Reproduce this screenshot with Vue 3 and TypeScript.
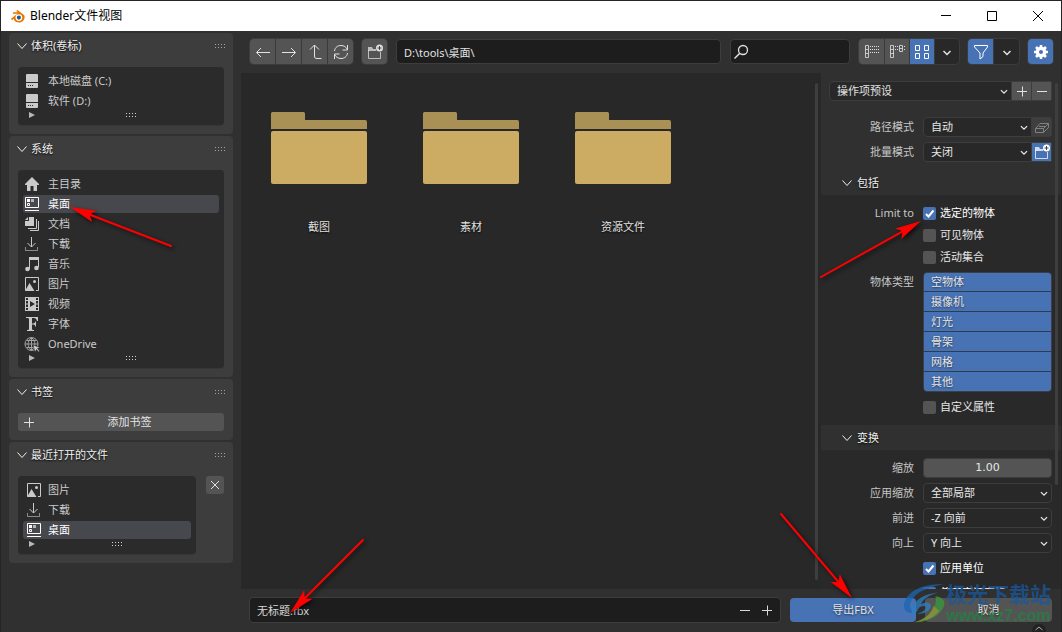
<script setup lang="ts">
import { ref } from 'vue'

interface Place {
  icon: string
  name: string
}

const icons: Record<string, string> = {
  drive:
    '<path d="M3 1h10a1 1 0 0 1 1 1v7H2V2a1 1 0 0 1 1-1zM2 10h12v4a1 1 0 0 1-1 1H3a1 1 0 0 1-1-1z" fill="currentColor" stroke="none"/><path d="M4 12.500h1M6 12.500h1M8 12.500h1" stroke="#2b2b2b"/>',
  home: '<path d="M8 1 15 8v1h-2v6h-3.500v-5h-3v5H3V9H1V8l3-3z" fill="currentColor" stroke="none"/>',
  desktop:
    '<path d="M1.500 1.500h13v10h-13zM1 14.500h14M3.500 7.500h2v2h-2z"/><path d="M3 3h3v3H3z" fill="currentColor" stroke="none"/><path d="M7 3h3v3H7z" fill="currentColor" stroke="none" opacity=".6"/>',
  documents:
    '<path d="M5 1h5v9H1V5h4z" fill="currentColor" stroke="none"/><path d="M4 1 1 4h3z" fill="currentColor" stroke="none"/><path d="M12.500 3v9.500H4M14.500 5v9.500H6"/>',
  download: '<path d="M7.500 1v10M3.500 7l4 4 4-4"/><path d="M1.500 11v3.500h12V11" opacity=".6"/>',
  music:
    '<path d="M5.500 13V2.500h9V11"/><path d="M5 1h10v3H5z" fill="currentColor" stroke="none"/><circle cx="3.500" cy="13" r="2.300" fill="currentColor" stroke="none"/><circle cx="12.500" cy="12" r="2.300" fill="currentColor" stroke="none"/>',
  image:
    '<path d="M12 14.500h2.500v-13h-13v13"/><path d="M1 15 5.500 7l5 8z" fill="currentColor" stroke="none"/><circle cx="10.500" cy="5.500" r="1.500" fill="currentColor" stroke="none"/>',
  video:
    '<path d="M4 1h8v14H4z" fill="currentColor" stroke="none"/><path d="M6 5v6l5-3z" fill="#2b2b2b" stroke="none"/><path d="M1.500 1v14M14.500 1v14M1 1.500h3M12 1.500h3M1 4.500h3M12 4.500h3M1 8h3M12 8h3M1 11.500h3M12 11.500h3M1 14.500h3M12 14.500h3"/>',
  font: '<path d="M2 1h12v4h-1c-.5-2-1.500-3-3-3H8v5.500h1c1.500 0 2-.7 2.300-2H12v5h-.7C11 9 10.500 8.500 9 8.500H8V13c0 .8.500 1 2 1v1H3v-1c1.500 0 2-.2 2-1V3c0-.8-.5-1-3-1z" fill="currentColor" stroke="none"/>',
  globe:
    '<g opacity=".75"><circle cx="7.500" cy="8" r="6.500"/><path d="M7.500 1.500v13M1 8h13M2.500 4.500h10M2.500 11.500h7M7.500 1.500c-4.500 4-4.500 9 0 13M7.500 1.500c4.500 4 4.500 9 0 13"/></g><path d="m9 9 7 2.500-2.500 1L15.500 15l-1 1-2-2.500L11 16z" fill="currentColor" stroke="#2b2b2b" stroke-width=".5"/>',
  back: '<path d="M15 8.500H1.500M6 4 1.500 8.500 6 13"/>',
  forward: '<path d="M1 8.500h13.500M10 4l4.500 4.500L10 13"/>',
  up: '<path d="M3 5.500 7.500 1 12 5.500M7.500 1v11c0 2 1 2.500 2.500 2.500h4.500"/>',
  refresh: '<path d="M1.500 7C2 3 5 1.500 8 1.500c3 0 5 1.500 6.500 4M14.500 1v5h-5M14.500 9c-.5 4-3.500 5.500-6.500 5.500-3 0-5-1.500-6.500-4M1.500 15v-5h5"/>',
  newfolder:
    '<path d="M1.500 6v8.500h12V8" opacity=".75"/><path d="M1 3h4l1 2h3v2H1z" fill="currentColor" stroke="none" opacity=".75"/><circle cx="12.500" cy="4" r="3.500" fill="currentColor" stroke="none"/><path d="M12.500 2v4M10.500 4h4" stroke="#454545"/>',
  search: '<circle cx="10" cy="6" r="4.500" stroke-width="1.300"/><path d="M6.800 9.200 1.500 14.500" stroke-width="1.500"/>',
  list: '<path d="M1.500 1.500h3v12h-3zM1.500 5.500h3M1.500 9.500h3" opacity=".8"/><path d="M6 2.500h9M6 5.500h9M6 8.500h9" stroke-dasharray="1 1"/>',
  detail:
    '<path d="M1.500 1.500h3v12h-3zM1.500 5.500h3M1.500 9.500h3M10.500 1.500h3v6h-3zM10.500 4.500h3" opacity=".8"/><path d="M6 2.500h3M6 5.500h3M15 2.500h1M15 5.500h1" stroke-dasharray="1 1"/>',
  grid: '<path d="M1.500 1.500h4v5h-4zM10.500 1.500h4v5h-4zM1.500 9.500h4v5h-4zM10.500 9.500h4v5h-4z"/>',
  filter: '<path d="M1.500 1.500h13v1.500L10 9v3.500l-3 2.500V9L1.500 3z"/>',
  gear: '<circle cx="8" cy="8" r="3.700" stroke-width="3.400"/><path d="M8 1v3M8 12v3M1 8h3M12 8h3M3 3l2 2M11 11l2 2M13 3l-2 2M3 13l2-2" stroke-width="2.600"/>',
  chevron: '<path d="m4.500 7 3.500 3.500L11.500 7" stroke-width="1.500"/>',
  thin: '<path d="m3.500 5.500 4.500 5 4.500-5"/>',
  plus: '<path d="M3 8.500h10M8.500 3.500v10"/>',
  minus: '<path d="M3 8.500h10"/>',
  cross: '<path d="m4 4 8 8M12 4l-8 8"/>',
  box: '<path d="M1.500 9.500h8v4h-8zM1.500 9.500 6 4.500h8.500l-5 5M14.500 4.500v4l-5 5M5 7.500h6"/>',
}

const volumes: Place[] = [
  { icon: 'drive', name: '本地磁盘 (C:)' },
  { icon: 'drive', name: '软件 (D:)' },
]
const system: Place[] = [
  { icon: 'home', name: '主目录' },
  { icon: 'desktop', name: '桌面' },
  { icon: 'documents', name: '文档' },
  { icon: 'download', name: '下载' },
  { icon: 'music', name: '音乐' },
  { icon: 'image', name: '图片' },
  { icon: 'video', name: '视频' },
  { icon: 'font', name: '字体' },
  { icon: 'globe', name: 'OneDrive' },
]
const recent: Place[] = [
  { icon: 'image', name: '图片' },
  { icon: 'download', name: '下载' },
  { icon: 'desktop', name: '桌面' },
]
const placeLists = [
  { title: '体积(卷标)', items: volumes },
  { title: '系统', items: system },
]
const folders = ['截图', '素材', '资源文件']

const current = ref('桌面')
const path = ref('D:\\tools\\桌面\\')
const query = ref('')
const fileName = ref('无标题.fbx')
const scale = ref('1.00')

const limits = ref([
  { name: '选定的物体', on: true },
  { name: '可见物体', on: false },
  { name: '活动集合', on: false },
])
const custom = ref(false)
const units = ref([
  { name: '应用单位', on: true },
  { name: '使用空间变换', on: true },
])
const objectTypes = ref(
  ['空物体', '摄像机', '灯光', '骨架', '网格', '其他'].map((name) => ({ name, on: true })),
)
const axes = [
  { id: 'apply', label: '应用缩放', value: '全部局部' },
  { id: 'fwd', label: '前进', value: '-Z 向前' },
  { id: 'upward', label: '向上', value: 'Y 向上' },
]

// Annotation arrows: tail and tip positions on the canvas
const arrows = [
  [171, 246, 70, 207],
  [821, 277, 921, 221],
  [363, 540, 290, 613],
  [781, 514, 852, 598],
].map(([x1, y1, x2, y2]) => {
  const length = Math.hypot(x2 - x1, y2 - y1)
  const ux = (x2 - x1) / length
  const uy = (y2 - y1) / length
  const at = (back: number, side: number) =>
    `${x2 - ux * back - uy * side},${y2 - uy * back + ux * side}`
  return {
    shaft: `M${x1},${y1}L${at(18, 0)}`,
    head: [at(0, 0), at(26, 6), at(21, 0), at(26, -6)].join(' '),
  }
})
</script>

<template>
  <div class="window">
    <header class="titlebar">
      <svg class="logo" viewBox="0 0 16 14" aria-hidden="true">
        <path d="M1 9.500 8 4H3V2.500h5.500L6.500 1 8 0l7 5.500c2 3-.5 8-5.500 8-3.500 0-5.500-2.500-5.500-4L2 11z" fill="#ea7600" />
        <circle cx="9.500" cy="8.200" r="3.600" fill="#fff" />
        <circle cx="9.500" cy="8.200" r="2.200" fill="#265787" />
      </svg>
      <h1>Blender文件视图</h1>
      <button type="button" aria-label="最小化"><svg viewBox="0 0 12 12"><path d="M1 5.500h10" /></svg></button>
      <button type="button" aria-label="最大化"><svg viewBox="0 0 12 12"><path d="M1.500 1.500h9v9h-9z" /></svg></button>
      <button type="button" aria-label="关闭"><svg viewBox="0 0 12 12"><path d="m1 1 10 10M11 1 1 11" /></svg></button>
    </header>

    <div class="body">
      <aside class="sidebar">
        <section v-for="group in placeLists" :key="group.title" class="panel">
          <h2>
            <svg class="icon" viewBox="0 0 16 16" v-html="icons.thin" />
            {{ group.title }}
            <span class="grip head-grip" />
          </h2>
          <div class="places">
            <button
              v-for="item in group.items"
              :key="item.name"
              type="button"
              :class="['place', { active: item.name === current }]"
              @click="current = item.name"
            >
              <svg class="icon" viewBox="0 0 16 16" v-html="icons[item.icon]" />{{ item.name }}
            </button>
            <div class="list-foot"><span class="play" /><span class="grip" /></div>
          </div>
        </section>

        <section class="panel">
          <h2>
            <svg class="icon" viewBox="0 0 16 16" v-html="icons.thin" />
            书签
            <span class="grip head-grip" />
          </h2>
          <button type="button" class="add">
            <svg class="icon" viewBox="0 0 16 16" v-html="icons.plus" /><span>添加书签</span>
          </button>
        </section>

        <section class="panel">
          <h2>
            <svg class="icon" viewBox="0 0 16 16" v-html="icons.thin" />
            最近打开的文件
            <span class="grip head-grip" />
          </h2>
          <div class="recent">
            <div class="places inset">
              <button
                v-for="item in recent"
                :key="item.name"
                type="button"
                :class="['place', { active: item.name === current }]"
                @click="current = item.name"
              >
                <svg class="icon" viewBox="0 0 16 16" v-html="icons[item.icon]" />{{ item.name }}
              </button>
              <div class="list-foot"><span class="play" /><span class="grip" /></div>
            </div>
            <button type="button" class="clear" aria-label="清除">
              <svg class="icon" viewBox="0 0 16 16" v-html="icons.cross" />
            </button>
          </div>
        </section>
      </aside>

      <nav class="toolbar">
        <div class="group">
          <button v-for="n in ['back', 'forward', 'up', 'refresh']" :key="n" type="button" class="tool" :aria-label="n">
            <svg class="icon" viewBox="0 0 16 16" v-html="icons[n]" />
          </button>
        </div>
        <div class="group">
          <button type="button" class="tool" aria-label="新建文件夹">
            <svg class="icon" viewBox="0 0 16 16" v-html="icons.newfolder" />
          </button>
        </div>
        <input v-model="path" class="text path" type="text" aria-label="路径" />
        <label class="search">
          <svg class="icon" viewBox="0 0 16 16" v-html="icons.search" />
          <input v-model="query" class="text" type="text" aria-label="搜索" />
        </label>
        <div class="group modes">
          <button type="button" class="tool" aria-label="垂直列表"><svg class="icon" viewBox="0 0 16 16" v-html="icons.list" /></button>
          <button type="button" class="tool" aria-label="水平列表"><svg class="icon" viewBox="0 0 16 16" v-html="icons.detail" /></button>
          <button type="button" class="tool on" aria-label="缩略图"><svg class="icon" viewBox="0 0 16 16" v-html="icons.grid" /></button>
          <button type="button" class="tool dark" aria-label="显示设置"><svg class="icon" viewBox="0 0 16 16" v-html="icons.chevron" /></button>
        </div>
        <div class="group">
          <button type="button" class="tool on" aria-label="过滤"><svg class="icon" viewBox="0 0 16 16" v-html="icons.filter" /></button>
          <button type="button" class="tool dark" aria-label="过滤设置"><svg class="icon" viewBox="0 0 16 16" v-html="icons.chevron" /></button>
        </div>
        <div class="group">
          <button type="button" class="tool on" aria-label="选项"><svg class="icon" viewBox="0 0 16 16" v-html="icons.gear" /></button>
        </div>
      </nav>

      <main class="files">
        <button v-for="name in folders" :key="name" type="button" class="folder">
          <svg viewBox="0 0 96 72" aria-hidden="true">
            <path d="M0 17V1.500Q0 0 1.500 0h31Q34 0 34 1.500V8h60q2 0 2 2v7z" fill="#a99156" />
            <rect y="19" width="96" height="53" rx="2" fill="#ccab62" />
          </svg>
          {{ name }}
        </button>
        <span class="thumb" />
      </main>

      <aside class="options">
        <div class="presets-block">
          <div class="joined">
            <div class="select">
              <select aria-label="操作项预设"><option>操作项预设</option></select>
              <svg class="icon" viewBox="0 0 16 16" v-html="icons.chevron" />
            </div>
            <button type="button" class="mini" aria-label="添加预设"><svg class="icon" viewBox="0 0 16 16" v-html="icons.plus" /></button>
            <button type="button" class="mini" aria-label="移除预设"><svg class="icon" viewBox="0 0 16 16" v-html="icons.minus" /></button>
          </div>
          <div class="rows">
            <div class="field">
              <label for="pathmode">路径模式</label>
              <div class="joined">
                <div class="select">
                  <select id="pathmode"><option>自动</option></select>
                  <svg class="icon" viewBox="0 0 16 16" v-html="icons.chevron" />
                </div>
                <button type="button" class="mini dim" aria-label="内嵌纹理"><svg class="icon" viewBox="0 0 16 16" v-html="icons.box" /></button>
              </div>
            </div>
            <div class="field">
              <label for="batch">批量模式</label>
              <div class="joined">
                <div class="select">
                  <select id="batch"><option>关闭</option></select>
                  <svg class="icon" viewBox="0 0 16 16" v-html="icons.chevron" />
                </div>
                <button type="button" class="mini on" aria-label="批量自有目录"><svg class="icon" viewBox="0 0 16 16" v-html="icons.newfolder" /></button>
              </div>
            </div>
          </div>
        </div>

        <h3><svg class="icon" viewBox="0 0 16 16" v-html="icons.thin" />包括</h3>
        <div class="include">
          <div class="field top">
            <span class="caption">Limit to</span>
            <div>
              <label v-for="item in limits" :key="item.name" class="check">
                <input v-model="item.on" type="checkbox" />
                <svg v-if="item.on" viewBox="0 0 13 13"><path d="m3 7 2.500 2.500L10.500 3.500" /></svg>
                <span>{{ item.name }}</span>
              </label>
            </div>
          </div>
          <div class="field top">
            <span class="caption types-caption">物体类型</span>
            <div class="types">
              <button
                v-for="item in objectTypes"
                :key="item.name"
                type="button"
                :class="{ off: !item.on }"
                :aria-pressed="item.on"
                @click="item.on = !item.on"
              >{{ item.name }}</button>
            </div>
          </div>
          <div class="field top">
            <span />
            <label class="check"><input v-model="custom" type="checkbox" /><span>自定义属性</span></label>
          </div>
        </div>

        <h3><svg class="icon" viewBox="0 0 16 16" v-html="icons.thin" />变换</h3>
        <div class="rows transform">
          <div class="field">
            <label for="scale">缩放</label>
            <input id="scale" v-model="scale" class="number" type="text" inputmode="decimal" />
          </div>
          <div v-for="axis in axes" :key="axis.id" class="field">
            <label :for="axis.id">{{ axis.label }}</label>
            <div class="select">
              <select :id="axis.id"><option>{{ axis.value }}</option></select>
              <svg class="icon" viewBox="0 0 16 16" v-html="icons.chevron" />
            </div>
          </div>
          <div v-for="item in units" :key="item.name" class="field">
            <span />
            <label class="check">
              <input v-model="item.on" type="checkbox" />
              <svg v-if="item.on" viewBox="0 0 13 13"><path d="m3 7 2.500 2.500L10.500 3.500" /></svg>
              <span>{{ item.name }}</span>
            </label>
          </div>
        </div>
        <span class="thumb short" />
      </aside>

      <footer class="footer">
        <div class="filename">
          <input v-model="fileName" class="text" type="text" aria-label="文件名" />
          <button type="button" aria-label="减少"><svg class="icon" viewBox="0 0 16 16" v-html="icons.minus" /></button>
          <button type="button" aria-label="增加"><svg class="icon" viewBox="0 0 16 16" v-html="icons.plus" /></button>
        </div>
        <button type="button" class="action primary">导出FBX</button>
        <button type="button" class="action">取消</button>
        <span class="tab"><svg viewBox="0 0 14 8"><path d="m3.500 6 3.500-3 3.500 3" /></svg></span>
      </footer>
    </div>

    <div class="watermark" aria-hidden="true">
      <svg viewBox="0 0 44 44">
        <path d="M11 31C1 33-2 24 4 15 11 5 26 1 43 1 27 4 14 9 9 18c-3 5-2 9 2 13z" fill="#1b66b3" />
        <path d="M10 33C8 24 15 12 37 10c-10 3-16 7-18 12 5-3 11-2 10 3-1 5-8 8-14 7 5-1 9-4 9-6 0-3-6-2-8 1-1 3-3 5-6 6z" fill="#2b80c4" />
        <path d="M34 14c10 1 12 8 6 15-6 8-17 12-27 12 12-4 24-14 21-27z" fill="#3a9a3c" />
        <path d="M32 24c-2 8-9 14-20 17 9 0 20-4 26-12z" fill="#8fa035" />
      </svg>
      <div><b>极光下载站</b><i>www.xz7.com</i></div>
    </div>

    <svg class="annotations" aria-hidden="true">
      <g v-for="arrow in arrows" :key="arrow.shaft">
        <path :d="arrow.shaft" />
        <polygon :points="arrow.head" />
      </g>
    </svg>
  </div>
</template>

<style>
body {
  margin: 0;
  background: #303030;
}
</style>

<style scoped>
* {
  box-sizing: border-box;
}
.window {
  position: relative;
  display: flex;
  flex-direction: column;
  height: 100vh;
  overflow: hidden;
  border: 1px solid #262427;
  border-bottom: 0;
  background: #303030;
  color: #e2e2e2;
  font: 11px/20px "Noto Sans", "Noto Sans CJK SC", sans-serif;
}
button,
input,
select {
  margin: 0;
  padding: 0;
  border: 0;
  outline: 0;
  background: none;
  color: inherit;
  font: inherit;
  text-shadow: inherit;
}
h1,
h2,
h3 {
  margin: 0;
  font: inherit;
}
svg {
  display: block;
}
.icon {
  flex: none;
  width: 16px;
  height: 16px;
  fill: none;
  stroke: currentColor;
}
.titlebar {
  display: flex;
  flex: none;
  align-items: center;
  height: 30px;
  padding-left: 9px;
  background: #fff;
  color: #000;
  font-size: 12px;
}
.titlebar h1 {
  flex: 1;
  padding-left: 5px;
}
.logo {
  width: 15px;
  height: 13px;
}
.titlebar button {
  display: grid;
  place-items: center;
  width: 46px;
  height: 30px;
}
.titlebar button svg {
  width: 12px;
  height: 12px;
  fill: none;
  stroke: #000;
}
.body {
  display: grid;
  flex: 1;
  grid-template: 42px minmax(0, 1fr) 43px / 240px minmax(0, 1fr) 240px;
  grid-template-areas: "side tools tools" "side files options" "side foot foot";
  min-height: 0;
}
.sidebar {
  display: flex;
  grid-area: side;
  flex-direction: column;
  gap: 2px;
  padding: 2px 8px;
}
.panel {
  padding: 0 9px 9px;
  border-radius: 4px;
  background: #3d3d3d;
}
.panel h2 {
  display: flex;
  align-items: center;
  gap: 1px;
  height: 26px;
  margin: 0 -2px 8px -4px;
  color: #f0f0f0;
  text-shadow: 0 1px 2px #000;
}
.grip {
  width: 10px;
  height: 4px;
  background: conic-gradient(from 270deg at 1px 1px, #d0d0d0 90deg, transparent 0) 0 0 / 3px 3px;
}
.head-grip {
  margin-right: 1px;
  margin-left: auto;
  opacity: 0.7;
}
.places {
  padding: 4px 5px 0;
  border-radius: 4px;
  background: #2b2b2b;
  box-shadow: 0 1px 0 #363636;
}
.place {
  display: flex;
  align-items: center;
  gap: 8px;
  width: 100%;
  height: 18px;
  margin: 2px 0;
  padding-left: 1px;
  border-radius: 3px;
  color: #cacaca;
}
.place:first-child {
  margin-top: 1px;
}
.inset .place {
  gap: 6px;
  padding-left: 3px;
}
.place.active {
  background: #47484e;
  color: #fff;
}
.list-foot {
  display: grid;
  grid-template-columns: 20px 1fr;
  height: 13px;
  padding: 0 6px;
}
.play {
  width: 0;
  height: 0;
  border: 3px solid transparent;
  border-right: 0;
  border-left: 6px solid #b8b8b8;
}
.list-foot .grip {
  justify-self: center;
  margin-top: 1px;
}
.add {
  display: grid;
  grid-template-columns: 16px 1fr;
  align-items: center;
  width: 100%;
  height: 18px;
  padding: 0 2px 0 3px;
  border-radius: 3px;
  background: #545454;
  line-height: 18px;
}
.recent {
  display: grid;
  grid-template-columns: 1fr 18px;
  gap: 10px;
}
.clear {
  display: grid;
  place-items: center;
  height: 18px;
  border-radius: 3px;
  background: #545454;
}
.toolbar {
  display: flex;
  grid-area: tools;
  gap: 9px;
  padding: 8px 8px 0 9px;
}
.group {
  display: flex;
  flex: none;
  gap: 1px;
  height: 25px;
  overflow: hidden;
  border-radius: 4px;
  background: #3a3a3a;
  box-shadow: 0 0 0 1px #3c3c3c;
}
.tool {
  display: grid;
  place-items: center;
  width: 25px;
  height: 25px;
  background: #545454;
}
.modes .tool:not(:first-child) {
  width: 24px;
}
.tool.on,
.mini.on {
  background: #4772b3;
  color: #fff;
}
.tool.dark {
  background: #282828;
}
.text {
  min-width: 0;
  height: 25px;
  padding: 0 7px;
}
.path,
.search,
.filename {
  border: 1px solid #3d3d3d;
  border-radius: 4px;
  background: #1d1d1d;
}
.path {
  flex: 8 1 0;
}
.search {
  display: flex;
  flex: 3 1 0;
  align-items: center;
  min-width: 0;
  height: 25px;
  padding-left: 2px;
}
.search .text {
  flex: 1;
  height: 23px;
}
.files {
  position: relative;
  display: flex;
  grid-area: files;
  flex-wrap: wrap;
  align-content: flex-start;
  padding: 39px 8px 0 2px;
  background: #282828;
}
.folder {
  display: flex;
  flex-direction: column;
  align-items: center;
  gap: 33px;
  width: 152px;
  text-shadow: 0 1px 2px #000;
}
.folder svg {
  width: 96px;
  height: 72px;
}
.thumb {
  position: absolute;
  top: 10px;
  right: 3px;
  bottom: 9px;
  width: 3px;
  border-radius: 2px;
  background: #3e3e3e;
}
.thumb.short {
  bottom: 104px;
}
.options {
  position: relative;
  grid-area: options;
  overflow: hidden;
  background: #292929;
}
.presets-block {
  padding: 8px 9px 8px 8px;
  background: #303030;
}
.rows {
  display: grid;
  gap: 5px;
}
.presets-block .rows {
  margin-top: 16px;
}
.joined {
  display: flex;
  min-width: 0;
  height: 20px;
  overflow: hidden;
  border-radius: 4px;
}
.joined .select {
  flex: 1;
  border-radius: 4px 0 0 4px;
}
.select {
  display: grid;
  align-items: center;
  min-width: 0;
  height: 20px;
  border: 1px solid #3d3d3d;
  border-radius: 4px;
  background: #282828;
}
.select select {
  grid-area: 1 / 1;
  width: 100%;
  height: 18px;
  padding-left: 7px;
  appearance: none;
  line-height: 18px;
}
.select .icon {
  grid-area: 1 / 1;
  justify-self: end;
  width: 14px;
  pointer-events: none;
}
.mini {
  display: grid;
  place-items: center;
  width: 20px;
  border: 1px solid #3d3d3d;
  border-left-width: 0;
  background: #545454;
}
.mini.dim {
  background: #3f3f3f;
  color: #808080;
}
.field {
  display: grid;
  grid-template-columns: minmax(0, 1fr) 129px;
  gap: 9px;
  align-items: center;
  min-height: 20px;
  color: #e6e6e6;
}
.field.top {
  align-items: start;
}
.field > label:first-child,
.caption {
  color: #c6c6c6;
  text-align: right;
}
.caption {
  line-height: 22px;
}
.types-caption {
  line-height: 20px;
}
h3 {
  display: flex;
  align-items: center;
  gap: 2px;
  height: 25px;
  padding-left: 18px;
  background: #303030;
  color: #f0f0f0;
  text-shadow: 0 1px 2px #000;
}
.include {
  display: grid;
  gap: 4px;
  padding: 7px 9px 7px 8px;
}
.check {
  display: grid;
  grid-template-columns: 13px 1fr;
  gap: 4px;
  align-items: center;
  height: 22px;
}
.check input {
  grid-area: 1 / 1;
  width: 13px;
  height: 13px;
  border-radius: 2px;
  appearance: none;
  background: #545454;
}
.check input:checked {
  background: #4772b3;
}
.check input:checked ~ span {
  color: #fff;
}
.check svg {
  grid-area: 1 / 1;
  width: 13px;
  height: 13px;
  fill: none;
  stroke: #fff;
  stroke-width: 2;
  pointer-events: none;
}
.types {
  display: grid;
  gap: 1px;
  overflow: hidden;
  border: 1px solid #3a3f48;
  border-radius: 4px;
  background: #2f3c50;
}
.types button {
  height: 19px;
  padding-left: 7px;
  background: #4772b3;
  line-height: 18px;
  text-align: left;
  text-shadow: 0 1px 2px #0008;
}
.types button:first-child {
  height: 18px;
}
.types button.off {
  background: #282828;
}
.transform {
  padding: 8px 9px 0 8px;
}
.transform .check {
  height: 20px;
}
.number {
  width: 100%;
  height: 20px;
  border: 1px solid #3d3d3d;
  border-radius: 4px;
  background: #545454;
  font-family: "DejaVu Sans", sans-serif;
  text-align: center;
}
.footer {
  position: relative;
  display: grid;
  grid-area: foot;
  grid-template-columns: minmax(0, 1fr) 126px 127px;
  gap: 9px;
  padding: 8px 9px 0 8px;
  background: #303030;
}
.filename {
  display: flex;
  align-items: center;
  height: 26px;
  padding-right: 1px;
  color: #d8d8d8;
}
.filename .text {
  flex: 1;
  height: 24px;
  padding-bottom: 1px;
}
.filename button {
  width: 22px;
  padding-left: 2px;
}
.action {
  height: 24px;
  margin-top: 1px;
  border-radius: 4px;
  background: #545454;
  text-shadow: 0 1px 2px #0008;
}
.action.primary {
  background: #4772b3;
}
.tab {
  position: absolute;
  right: 15px;
  bottom: 0;
  width: 14px;
  height: 8px;
  border-radius: 7px 7px 0 0;
  background: #222;
}
.tab svg {
  fill: none;
  stroke: #aaa;
}
.watermark {
  position: absolute;
  right: 10px;
  bottom: 6px;
  display: flex;
  align-items: center;
  opacity: 0.75;
  pointer-events: none;
}
.watermark svg {
  width: 44px;
  height: 42px;
}
.watermark b {
  display: block;
  color: #17599f;
  font-size: 21px;
  line-height: 24px;
}
.watermark i {
  display: block;
  color: #1f8543;
  font: bold 16px/20px "Liberation Sans", Arial, sans-serif;
}
.annotations {
  position: absolute;
  top: -1px;
  left: -1px;
  width: 1062px;
  height: 632px;
  filter: drop-shadow(2px 2px 2px #000a);
  pointer-events: none;
}
.annotations path {
  stroke: #fe0000;
  stroke-width: 2;
  stroke-linecap: round;
}
.annotations polygon {
  fill: #fe0000;
}
</style>
